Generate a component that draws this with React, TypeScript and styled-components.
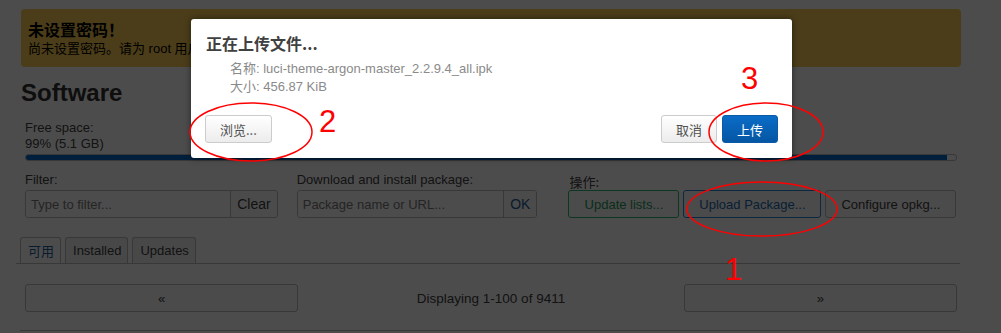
import React from 'react';
import styled, { createGlobalStyle } from 'styled-components';

const GlobalStyle = createGlobalStyle`
  html, body {
    margin: 0;
    padding: 0;
    background: #ffffff;
    overflow: hidden;
  }
  body {
    font-family: 'Liberation Sans', Arial, 'Noto Sans CJK SC', sans-serif;
    font-size: 13px;
    color: #404040;
  }
  * {
    box-sizing: border-box;
  }
`;

export default function App() {
  return (
    <>
      <GlobalStyle />
      <Screen>
        <Page>
          <Alert>
            <AlertTitle>未设置密码！</AlertTitle>
            <AlertText>尚未设置密码。请为 root 用户设置密码以保护主机并开启 SSH。</AlertText>
          </Alert>
          <Heading>Software</Heading>
          <Body>
            <Label>Free space:</Label>
            <Label>99% (5.1 GB)</Label>
            <Progress>
              <ProgressFill style={{ width: '99%' }} />
            </Progress>
            <Controls>
              <Field $width={253}>
                <Label>Filter:</Label>
                <InputGroup>
                  <Input placeholder="Type to filter..." />
                  <Addon>Clear</Addon>
                </InputGroup>
              </Field>
              <Field $width={241}>
                <Label>Download and install package:</Label>
                <InputGroup>
                  <Input placeholder="Package name or URL..." />
                  <Addon $tone="blue">OK</Addon>
                </InputGroup>
              </Field>
              <Field $width={388}>
                <ActionLabel>操作:</ActionLabel>
                <ButtonRow>
                  <ActionButton $tone="green" $width={111}>Update lists...</ActionButton>
                  <ActionButton $tone="blue" $width={138}>Upload Package...</ActionButton>
                  <ActionButton $width={131}>Configure opkg...</ActionButton>
                </ButtonRow>
              </Field>
            </Controls>
          </Body>
          <Tabs>
            <Tab $active>可用</Tab>
            <Tab>Installed</Tab>
            <Tab>Updates</Tab>
          </Tabs>
          <Pager>
            <PageButton>«</PageButton>
            <PagerText>Displaying 1-100 of 9411</PagerText>
            <PageButton>»</PageButton>
          </Pager>
          <BottomRule />
        </Page>

        <Backdrop />

        <Modal>
          <ModalTitle>正在上传文件...</ModalTitle>
          <FileInfo>
            <div>名称: luci-theme-argon-master_2.2.9.4_all.ipk</div>
            <div>大小: 456.87 KiB</div>
          </FileInfo>
          <ModalFooter>
            <ModalButton>浏览...</ModalButton>
            <FooterRight>
              <ModalButton>取消</ModalButton>
              <ModalButton $primary>上传</ModalButton>
            </FooterRight>
          </ModalFooter>
        </Modal>

        <Marks width="1001" height="333" viewBox="0 0 1001 333">
          <ellipse cx="251" cy="132" rx="61" ry="29" />
          <ellipse cx="766" cy="132" rx="57" ry="29" />
          <ellipse cx="762" cy="209" rx="75" ry="27" />
          <text x="319" y="132">2</text>
          <text x="741" y="89">3</text>
          <text x="725" y="280">1</text>
        </Marks>
      </Screen>
    </>
  );
}

const Screen = styled.div`
  position: relative;
  width: 1001px;
  height: 333px;
  overflow: hidden;
`;

const Page = styled.div`
  width: 961px;
  padding: 9px 0 0 20px;
`;

const Alert = styled.div`
  margin-left: 1px;
  width: 940px;
  height: 58px;
  padding: 10px 7px;
  background: #fbcc56;
  border-radius: 4px;
  color: #000;
`;

const AlertTitle = styled.div`
  font-family: 'Noto Sans CJK SC', sans-serif;
  font-size: 16px;
  font-weight: bold;
  line-height: 20px;
`;

const AlertText = styled.div`
  width: 250px;
  white-space: nowrap;
  overflow: hidden;
  font-family: 'Liberation Sans', 'Noto Sans CJK SC', sans-serif;
  font-size: 13px;
  line-height: 19px;
`;

const Heading = styled.h2`
  margin: 12px 0 0 1px;
  font-size: 24px;
  line-height: 28px;
  font-weight: bold;
  color: #303030;
`;

const Body = styled.div`
  margin-top: 13px;
  padding: 0 4px 0 5px;
`;

const Label = styled.div`
  font-size: 13px;
  line-height: 16px;
  color: #404040;
`;

const ActionLabel = styled(Label)`
  font-family: 'Noto Sans CJK SC', sans-serif;
  margin-top: 2px;
`;

const Progress = styled.div`
  margin-top: 2px;
  height: 7px;
  border: 1px solid #bbb;
  border-radius: 3px;
  overflow: hidden;
`;

const ProgressFill = styled.div`
  height: 100%;
  background: #0069c8;
`;

const Controls = styled.div`
  margin-top: 11px;
  display: flex;
  gap: 19px;
`;

const Field = styled.div<{ $width: number }>`
  width: ${(p) => p.$width}px;
  display: flex;
  flex-direction: column;
  gap: 2px;
  &:last-child {
    margin-left: 13px;
    gap: 0;
  }
`;

const InputGroup = styled.div`
  display: flex;
  height: 28px;
  border: 1px solid #bbb;
  border-radius: 3px;
  overflow: hidden;
`;

const Input = styled.input`
  flex: 1;
  min-width: 0;
  border: none;
  padding: 0 5px;
  font: 13px 'Liberation Sans', Arial, sans-serif;
  color: #404040;
  background: #fff;
  &::placeholder {
    color: #7a7a7a;
  }
`;

const Addon = styled.div<{ $tone?: string }>`
  display: flex;
  align-items: center;
  padding: 0 6px;
  border-left: 1px solid #bbb;
  font-size: 14px;
  color: ${(p) => (p.$tone === 'blue' ? '#1b5f99' : '#404040')};
  background: #fafafa;
`;

const ButtonRow = styled.div`
  display: flex;
  gap: 4px;
  margin-left: -1px;
`;

const toneColor = (tone?: string) =>
  tone === 'green' ? '#1d9b5c' : tone === 'blue' ? '#1d6ab0' : '#404040';

const toneBorder = (tone?: string) =>
  tone === 'green' ? '#2ab96e' : tone === 'blue' ? '#2a86d6' : '#bbb';

const ActionButton = styled.div<{ $tone?: string; $width: number }>`
  width: ${(p) => p.$width}px;
  height: 28px;
  display: flex;
  align-items: center;
  justify-content: center;
  border: 1px solid ${(p) => toneBorder(p.$tone)};
  border-radius: 3px;
  font-size: 13px;
  color: ${(p) => toneColor(p.$tone)};
  background: #fafafa;
`;

const Tabs = styled.div`
  margin-top: 19px;
  margin-left: -4px;
  width: 944px;
  display: flex;
  gap: 4px;
  padding-left: 4px;
  border-bottom: 1px solid #bbb;
`;

const Tab = styled.div<{ $active?: boolean }>`
  height: 26px;
  padding: 0 6px 0 7px;
  display: flex;
  align-items: center;
  border: 1px solid #bbb;
  border-bottom: none;
  border-radius: 3px 3px 0 0;
  font-family: 'Liberation Sans', 'Noto Sans CJK SC', sans-serif;
  font-size: 13px;
  color: ${(p) => (p.$active ? '#1b5f99' : '#404040')};
  background: ${(p) => (p.$active ? '#fff' : '#f2f2f2')};
  margin-bottom: ${(p) => (p.$active ? '-1px' : '0')};
  padding-bottom: ${(p) => (p.$active ? '1px' : '0')};
`;

const Pager = styled.div`
  margin-top: 20px;
  padding: 0 4px 0 5px;
  display: flex;
  align-items: center;
  justify-content: space-between;
`;

const PageButton = styled.div`
  width: 273px;
  height: 28px;
  display: flex;
  align-items: center;
  justify-content: center;
  border: 1px solid #bbb;
  border-radius: 3px;
  font-size: 13px;
  color: #404040;
  background: #fafafa;
`;

const PagerText = styled.div`
  font-size: 13.5px;
  color: #404040;
`;

const BottomRule = styled.div`
  margin-top: 18px;
  width: 940px;
  height: 1px;
  background: #bbb;
`;

const Backdrop = styled.div`
  position: absolute;
  inset: 0;
  background: rgba(0, 0, 0, 0.7);
`;

const Modal = styled.div`
  position: absolute;
  left: 191px;
  top: 19px;
  width: 601px;
  height: 139px;
  padding: 12px 14px 0 14px;
  background: #fff;
  border-radius: 3px;
  box-shadow: 0 0 6px rgba(0, 0, 0, 0.5);
  display: flex;
  flex-direction: column;
`;

const ModalTitle = styled.div`
  margin-left: 1px;
  font-family: 'Noto Sans CJK SC', sans-serif;
  font-size: 16px;
  font-weight: bold;
  line-height: 24px;
  color: #404040;
`;

const FileInfo = styled.div`
  margin: 5px 0 0 25px;
  font-family: 'Liberation Sans', 'Noto Sans CJK SC', sans-serif;
  font-size: 13px;
  line-height: 18px;
  color: #8a8a8a;
`;

const ModalFooter = styled.div`
  margin-top: 19px;
  display: flex;
  justify-content: space-between;
`;

const FooterRight = styled.div`
  display: flex;
  gap: 5px;
`;

const ModalButton = styled.div<{ $primary?: boolean }>`
  height: 28px;
  padding: 0 14px;
  display: flex;
  align-items: center;
  justify-content: center;
  border-radius: 3px;
  font-family: 'Noto Sans CJK SC', sans-serif;
  font-size: 13px;
  color: ${(p) => (p.$primary ? '#fff' : '#505050')};
  border: 1px solid ${(p) => (p.$primary ? '#0a5aa5' : '#ccc')};
  background: ${(p) =>
    p.$primary
      ? 'linear-gradient(#0a6cc6, #0556a4)'
      : 'linear-gradient(#ffffff, #ececec)'};
`;

const Marks = styled.svg`
  position: absolute;
  left: 0;
  top: 0;
  pointer-events: none;
  ellipse {
    fill: none;
    stroke: #ff0000;
    stroke-width: 1.5;
  }
  text {
    fill: #ff0000;
    font-family: 'Liberation Sans', Arial, sans-serif;
    font-size: 31px;
  }
`;
